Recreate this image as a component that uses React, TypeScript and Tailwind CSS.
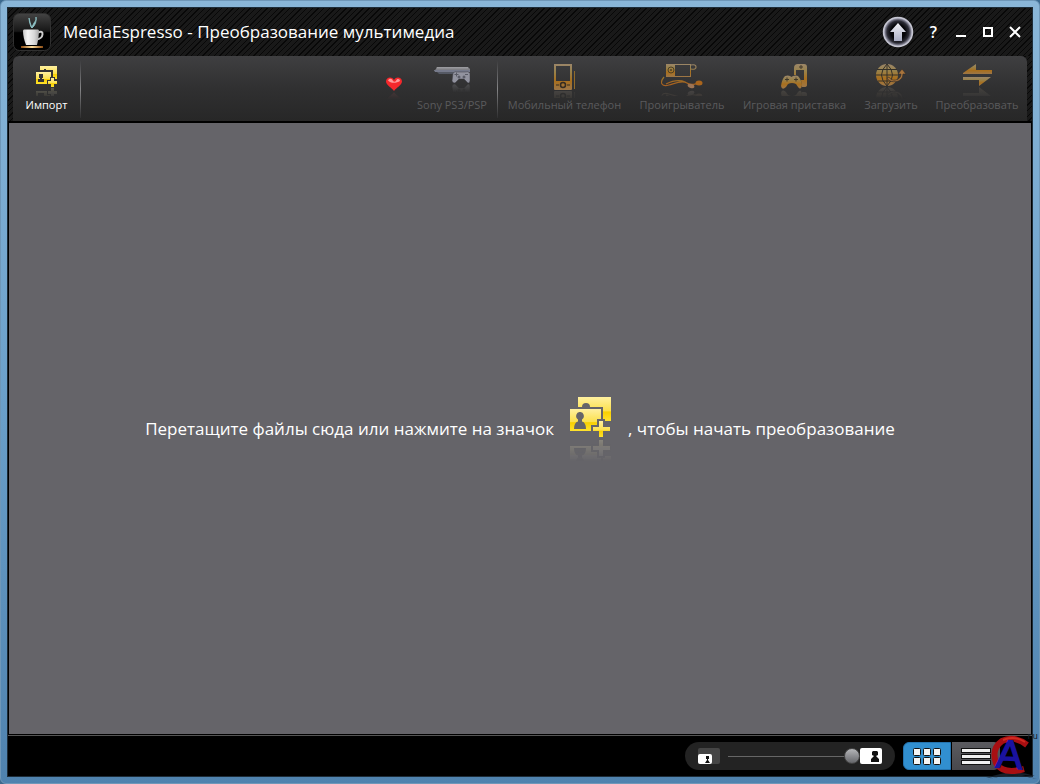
import type { ReactNode } from "react";

function Defs() {
  return (
    <svg width="0" height="0" className="absolute" aria-hidden="true">
      <defs>
        <linearGradient id="yellow" x1="0" y1="0" x2="0" y2="1">
          <stop offset="0" stopColor="#fff0a0" />
          <stop offset="0.58" stopColor="#fbe04c" />
          <stop offset="0.62" stopColor="#f8cf00" />
          <stop offset="1" stopColor="#ffe22e" />
        </linearGradient>
        <linearGradient id="bronze" x1="0" y1="0" x2="0" y2="1">
          <stop offset="0" stopColor="#9c8668" />
          <stop offset="0.3" stopColor="#98824c" />
          <stop offset="0.65" stopColor="#a96f1d" />
          <stop offset="1" stopColor="#9c7648" />
        </linearGradient>
        <linearGradient id="bronzeLine" gradientUnits="userSpaceOnUse" x1="0" y1="0" x2="0" y2="26">
          <stop offset="0" stopColor="#9c8668" />
          <stop offset="0.5" stopColor="#94742c" />
          <stop offset="0.8" stopColor="#a9601d" />
          <stop offset="1" stopColor="#8c6648" />
        </linearGradient>
        <linearGradient id="fade" x1="0" y1="0" x2="0" y2="1">
          <stop offset="0.45" stopColor="#fff" stopOpacity="0" />
          <stop offset="1" stopColor="#fff" stopOpacity="0.28" />
        </linearGradient>
        <mask id="reflect" maskContentUnits="objectBoundingBox">
          <rect width="1" height="1" fill="url(#fade)" />
        </mask>
      </defs>
    </svg>
  );
}

/* Draws an icon and its faded mirror image below it. */
function Mirrored({ w, h, line, children, className }: { w: number; h: number; line: number; children: ReactNode; className?: string }) {
  return (
    <svg width={w} height={h} viewBox={`0 0 ${w} ${h}`} className={className} aria-hidden="true">
      {children}
      <g transform={`translate(0 ${line * 2 + 1}) scale(1 -1)`} mask="url(#reflect)" className="saturate-[0.25]">
        {children}
      </g>
    </svg>
  );
}

function ImportShape({ bg }: { bg: string }) {
  return (
    <>
      <rect x="8" y="0" width="33" height="24" fill="url(#yellow)" />
      <path d="M12 10a3.500 3.500 0 0 1 8 0z" fill={bg} />
      <path d="M-1 10h34v16h-6v9H-1z" fill={bg} />
      <rect x="0" y="12" width="31" height="22" fill="url(#yellow)" />
      <path d="M10 15a3.500 4 0 0 1 2 7.500v2q4 1 4 7.500H4q0-6.500 4-7.500v-2A3.500 4 0 0 1 10 15z" fill={bg} />
      <path d="M27 22h8v6h6v8h-6v5h-8v-5h-6v-8h6z" fill={bg} />
      <path d="M29 24h4v6h7v4h-7v6h-4v-6h-6v-4h6z" fill="url(#yellow)" />
    </>
  );
}

function SmallImportShape() {
  return (
    <>
      <rect x="4" y="0" width="17" height="13" fill="url(#yellow)" />
      <path d="M6 5V4h2V3h2v1h1v1z" fill="#343436" />
      <path d="M0 4h17v9h-3v6H0z" fill="#343436" />
      <rect x="0" y="6" width="15" height="12" fill="url(#yellow)" />
      <path d="M3 8h4v4H6v1h2v3H2v-3h2v-1H3z" fill="#343436" />
      <path d="M14 11h5v3h3v5h-3v3h-5v-3h-3v-5h3z" fill="#343436" />
      <path d="M15 12h3v3h3v3h-3v3h-3v-3h-3v-3h3z" fill="url(#yellow)" />
    </>
  );
}

const icons = {
  heart: (
    <Mirrored w={16} h={28} line={14}>
      <path d="M8 14C6 11 0 8 0 4.500 0 0 6-1 8 3c2-4 8-3 8 1.500C16 8 10 11 8 14z" fill="#f5282c" />
      <path d="M2 3.500C3 1 6 1 7 4c1 1 2 1 3 0 1-3 4-2 4 0-3 2-9 3-12-.5z" fill="#ff9c9c" />
    </Mirrored>
  ),
  sony: (
    <Mirrored w={36} h={30} line={19}>
      <path d="M1 6 4 3h30l2 2v2H0z" fill="#808085" />
      <path d="M3 3h31v1.500H2z" fill="#9a9a9e" />
      <path d="M0 6h36v2H1z" fill="#767a8b" />
      <path d="M3 8h18v2H5z" fill="#555964" />
      <path d="M19 9q2-2 5-1h7q3-1 5 1v8q-1 4-4 0l-2-2h-5l-2 2q-3 4-5 0z" fill="#92939f" stroke="#3a3b42" strokeWidth="0.500" />
      <path d="M20.500 10.500h4M22.500 8.500v4M31 10.500h3" stroke="#595a65" strokeWidth="1" />
      <circle cx="25" cy="13" r="1.500" fill="#5c5d68" />
      <circle cx="30" cy="13" r="1.500" fill="#5c5d68" />
    </Mirrored>
  ),
  phone: (
    <Mirrored w={22} h={34} line={26}>
      <path d="M0 0h18v25q0 1-1 1H1q-1 0-1-1zM2 2v15h14V2z" fill="url(#bronze)" fillRule="evenodd" />
      <circle cx="9" cy="21" r="2.500" fill="none" stroke="#342c22" strokeWidth="1.500" />
      <path d="M2 21h3M13 21h3" stroke="#342c22" />
      <path d="M20.500 7v18" stroke="#8f6a2a" />
    </Mirrored>
  ),
  player: (
    <Mirrored w={42} h={32} line={25}>
      <path d="M5 0h25v13H5zM14 1v11h15V1z" fill="url(#bronze)" fillRule="evenodd" />
      <circle cx="10" cy="6" r="3" fill="none" stroke="#4c4026" />
      <circle cx="10" cy="6" r="1" fill="#4c4026" />
      <path d="M30 1q5-1 5 2t-5 2M3 13C-2 19 1 23 8 21s13-5 18-2 7 1 12 0M5 20c8-4 17-6 25 2" fill="none" stroke="url(#bronzeLine)" strokeWidth="1.200" />
      <ellipse cx="30" cy="22" rx="3.500" ry="2" fill="#9d7556" transform="rotate(20 30 22)" />
      <ellipse cx="38" cy="19" rx="3.500" ry="2.500" fill="#a9651d" />
    </Mirrored>
  ),
  game: (
    <Mirrored w={27} h={32} line={25}>
      <path d="M17 0h6q3 0 3 3v18q0 2-3 2h-2l-1-7h3V6h-8v5h-2V4q0-4 4-4z" fill="url(#bronze)" />
      <path d="M18 3h4M20 1v4" stroke="#40382a" />
      <path d="M4 12q3-1 5 0l1.500 1L12 12q3-1 5 0 3 3 4 9-1 6-4 2l-2-3q-4-2-8 0l-2 3q-4 4-5-1 1-7 4-10z" fill="url(#bronze)" />
      <path d="M4 15.500h4M6 13.500v4M13 15.500h4M15 13.500v4" stroke="#40382a" />
    </Mirrored>
  ),
  upload: (
    <Mirrored w={31} h={36} line={22}>
      <circle cx="11" cy="11" r="11" fill="url(#bronze)" />
      <path d="M11 0v22M1 5.500h20M0 11h22M2 17h18M11 0Q0 11 11 22M11 0q11 11 0 22" fill="none" stroke="#343028" />
      <path d="M13 13c2 5 12 4 12-3h-3l4-5 4 5h-3c0 9-13 10-16 4z" fill="#a8743c" stroke="#302c29" strokeWidth="0.600" />
    </Mirrored>
  ),
  convert: (
    <Mirrored w={29} h={36} line={22}>
      <path d="M0 9 13 0v6h16v4H0z" fill="url(#bronze)" />
      <path d="M0 13h28L16 22v-6H0z" fill="url(#bronze)" />
    </Mirrored>
  ),
};

const targets: { label: string; icon: ReactNode; width: string }[] = [
  { label: "Мобильный телефон", icon: icons.phone, width: "w-[115px]" },
  { label: "Проигрыватель", icon: icons.player, width: "w-[86px]" },
  { label: "Игровая приставка", icon: icons.game, width: "w-[105px]" },
  { label: "Загрузить", icon: icons.upload, width: "w-[54px]" },
  { label: "Преобразовать", icon: icons.convert, width: "w-[84px]" },
];

function ToolButton({ label, icon, width, active }: { label: string; icon: ReactNode; width: string; active?: boolean }) {
  return (
    <button
      type="button"
      className={`flex h-[65px] shrink-0 flex-col items-center justify-between pt-2 pb-2 text-[11px] leading-4 whitespace-nowrap ${width} ${active ? "text-white" : "text-[#5a5a5c]"}`}
    >
      <span className="flex h-8 items-start">{icon}</span>
      <span>{label}</span>
    </button>
  );
}

function Separator() {
  return <span className="h-[58px] w-px shrink-0 bg-linear-to-b from-[#3c3c3e] via-[#858587] to-[#303031]" />;
}

function Logo() {
  return (
    <svg width="38" height="38" viewBox="0 0 38 38" className="shrink-0" aria-hidden="true">
      <defs>
        <linearGradient id="tile" x1="0" y1="0" x2="0" y2="1">
          <stop offset="0" stopColor="#444" />
          <stop offset="0.48" stopColor="#161616" />
          <stop offset="0.52" stopColor="#000" />
          <stop offset="1" stopColor="#000" />
        </linearGradient>
        <linearGradient id="cup">
          <stop offset="0" stopColor="#c8c8c8" />
          <stop offset="0.3" stopColor="#f4f4f4" />
          <stop offset="0.7" stopColor="#d8d8d8" />
          <stop offset="1" stopColor="#aaa" />
        </linearGradient>
        <linearGradient id="saucer">
          <stop offset="0" stopColor="#8a4a10" />
          <stop offset="0.5" stopColor="#ffe0a0" />
          <stop offset="1" stopColor="#8a4a10" />
        </linearGradient>
      </defs>
      <rect x="0.500" y="0.500" width="37" height="37" rx="6" fill="url(#tile)" stroke="#303030" />
      <path d="M16 5q0 4 2 9l1 1q-2-5-3-10zM23 4q1 3-2 6-2 3-2 5 5-4 4-11z" fill="#8fc4c8" stroke="#8fc4c8" strokeWidth="0.800" />
      <path d="M25 19.500q5-2 4.500 2t-5.500 5" fill="none" stroke="#ccc" strokeWidth="2" />
      <path d="M10 18q0-1.500 1-1.500h14q1 0 1 1.500 0 6-2 14H13q-3-8-3-14z" fill="url(#cup)" />
      <rect x="8" y="33" width="22" height="2" fill="url(#saucer)" />
    </svg>
  );
}

function TitleBar() {
  return (
    <header className="flex h-12 shrink-0 items-center bg-[repeating-linear-gradient(135deg,#191919_0px,#191919_3px,#080808_3px,#080808_4px)] pr-1 pl-[5px] text-white">
      <Logo />
      <h1 className="ml-3 grow text-[17px] leading-6 whitespace-nowrap">MediaEspresso - Преобразование мультимедиа</h1>
      <button type="button" aria-label="Обновить" className="mr-1.5">
        <svg width="32" height="32" viewBox="0 0 32 32">
          <defs>
            <radialGradient id="orb">
              <stop offset="0.5" stopColor="#050508" />
              <stop offset="0.76" stopColor="#2c2c36" />
              <stop offset="0.95" stopColor="#a0a0b2" />
            </radialGradient>
            <linearGradient id="arrow" x1="0" y1="0" x2="0" y2="1">
              <stop offset="0" stopColor="#f2f2f6" />
              <stop offset="1" stopColor="#a9adc4" />
            </linearGradient>
          </defs>
          <circle cx="16" cy="16" r="14.500" fill="url(#orb)" stroke="#c6c6d2" strokeWidth="1.500" />
          <path d="M16 7 24 16h-4v9h-8v-9H8z" fill="url(#arrow)" />
        </svg>
      </button>
      <div className="flex items-center">
        <button type="button" aria-label="Справка" className="flex w-[27px] justify-center text-[16px] leading-5 font-semibold">?</button>
        <button type="button" aria-label="Свернуть" className="flex w-[27px] justify-center">
          <svg width="12" height="12" viewBox="0 0 12 12"><path d="M1 9h10v2H1z" fill="#fff" /></svg>
        </button>
        <button type="button" aria-label="Развернуть" className="flex w-[27px] justify-center">
          <svg width="12" height="12" viewBox="0 0 12 12"><path d="M2 2h8v8H2z" fill="none" stroke="#fff" strokeWidth="2" /></svg>
        </button>
        <button type="button" aria-label="Закрыть" className="flex w-[27px] justify-center">
          <svg width="12" height="12" viewBox="0 0 12 12"><path d="m1 1 10 10M11 1 1 11" stroke="#fff" strokeWidth="2" /></svg>
        </button>
      </div>
    </header>
  );
}

function Toolbar() {
  return (
    <div className="shrink-0 bg-[repeating-linear-gradient(135deg,#191919_0px,#191919_3px,#080808_3px,#080808_4px)] px-[5px]">
      <nav className="flex h-[65px] items-center rounded-t-md bg-linear-to-b from-[#3f3f41] via-[#303031] to-[#272727] pr-2">
        <ToolButton
          label="Импорт"
          width="w-[67px]"
          active
          icon={<Mirrored w={22} h={30} line={21} className="mt-0.5"><SmallImportShape /></Mirrored>}
        />
        <Separator />
        <div className="grow" />
        <button type="button" aria-label="Избранное" className="mr-[13px] flex h-8 items-end">{icons.heart}</button>
        <ToolButton label="Sony PS3/PSP" width="w-[74px]" icon={icons.sony} />
        <span className="ml-2 flex"><Separator /></span>
        <div className="ml-[9px] flex gap-[17px]">
          {targets.map((t) => (
            <ToolButton key={t.label} {...t} />
          ))}
        </div>
      </nav>
    </div>
  );
}

function DropArea() {
  return (
    <main className="flex min-h-0 grow items-center justify-center border border-t-2 border-black bg-[#656469] text-[17px] leading-6 whitespace-nowrap text-white">
      <span>Перетащите файлы сюда или нажмите на значок</span>
      <button type="button" aria-label="Импорт" className="mx-4">
        <Mirrored w={42} h={64} line={41}><ImportShape bg="#656469" /></Mirrored>
      </button>
      <span>, чтобы начать преобразование</span>
    </main>
  );
}

function Watermark() {
  return (
    <svg width="56" height="64" viewBox="0 -14 56 64" className="pointer-events-none absolute right-0 bottom-0" aria-hidden="true">
      <path d="M2 44Q28 34 51 42L38 41 53 45Q26 38 2 46l14-4z" fill="#16202a" />
      <path d="M43 11Q30 1 18 7 7 15 12 29q7 12 28 6" fill="none" stroke="#a80f12" strokeWidth="6" />
      <path d="M41 8Q30 1 19 6" fill="none" stroke="#d22a20" strokeWidth="2" />
      <text x="12" y="34" fontSize="40" fontFamily="Liberation Sans, sans-serif" fill="#1a12a0" stroke="#1a12a0" strokeWidth="1.500" transform="rotate(4 22 22)">A</text>
      <text x="43" y="5" fontSize="9" fontFamily="Liberation Mono, monospace" fill="#16202a">ru</text>
    </svg>
  );
}

function Footer() {
  return (
    <footer className="flex h-[41px] shrink-0 items-center justify-end border-t border-[#555] bg-black pr-8">
      <div className="flex h-7 w-[210px] items-center rounded-full bg-[#232323] pl-[13px]">
        <svg width="22" height="16" viewBox="0 0 22 16" aria-hidden="true">
          <rect width="22" height="16" rx="2" fill="#454545" />
          <rect y="6" width="14" height="10" rx="2" fill="#fff" />
          <path d="M8 8h3v3h-1v1l2 3H7l2-3v-1H8z" fill="#111" />
        </svg>
        <input
          type="range"
          aria-label="Размер эскизов"
          defaultValue={100}
          className="ml-2 h-4 w-[132px] appearance-none bg-transparent [&::-webkit-slider-runnable-track]:h-4 [&::-webkit-slider-runnable-track]:bg-[linear-gradient(#666,#666)] [&::-webkit-slider-runnable-track]:bg-[length:100%_1px] [&::-webkit-slider-runnable-track]:bg-center [&::-webkit-slider-runnable-track]:bg-no-repeat [&::-webkit-slider-thumb]:h-4 [&::-webkit-slider-thumb]:w-4 [&::-webkit-slider-thumb]:appearance-none [&::-webkit-slider-thumb]:rounded-full [&::-webkit-slider-thumb]:border [&::-webkit-slider-thumb]:border-[#444] [&::-webkit-slider-thumb]:bg-linear-to-b [&::-webkit-slider-thumb]:from-[#b5b6b9] [&::-webkit-slider-thumb]:to-[#66676b]"
        />
        <svg width="22" height="16" viewBox="0 0 22 16" aria-hidden="true">
          <rect width="22" height="16" rx="2" fill="#fff" />
          <path d="M13 3h4l1 1v3l-2 1 3 3v3h-8v-3l3-3-2-1V4z" fill="#111" />
        </svg>
      </div>
      <div className="ml-2 flex gap-px">
        <button type="button" aria-label="Эскизы" className="flex h-7 w-12 items-center justify-center rounded-l-md border border-[#2573ae] bg-[#318fd0]">
          <svg width="28" height="17" viewBox="0 0 28 17">
            {[0, 10, 20].map((x) => (
              <g key={x} fill="#f4f4f4" stroke="#111">
                <rect x={x + 0.5} y="0.500" width="7" height="7" rx="1" />
                <rect x={x + 0.5} y="9.500" width="7" height="7" rx="1" />
              </g>
            ))}
          </svg>
        </button>
        <button type="button" aria-label="Список" className="flex h-7 w-12 items-center justify-center rounded-r-md bg-linear-to-b from-[#5b5b60] to-[#48484c]">
          <svg width="30" height="17" viewBox="0 0 30 17">
            {[0, 6, 12].map((y) => (
              <rect key={y} x="0.500" y={y + 0.5} width="29" height="4" fill="#f0f0f0" stroke="#111" />
            ))}
          </svg>
        </button>
      </div>
    </footer>
  );
}

export default function App() {
  return (
    <div className="relative flex h-screen flex-col overflow-hidden bg-[#3d6a8f] font-['Open_Sans','Noto_Sans',sans-serif]">
      <Defs />
      <div className="flex min-h-0 grow flex-col rounded-md border border-[#6f97b8] bg-linear-to-b from-[#8ab6d8] via-[#6ba0ca] to-[#4f82ae] p-[6px]">
        <div className="flex min-h-0 grow flex-col border border-[#1d2c38]">
          <TitleBar />
          <Toolbar />
          <DropArea />
          <Footer />
        </div>
      </div>
      <Watermark />
    </div>
  );
}
